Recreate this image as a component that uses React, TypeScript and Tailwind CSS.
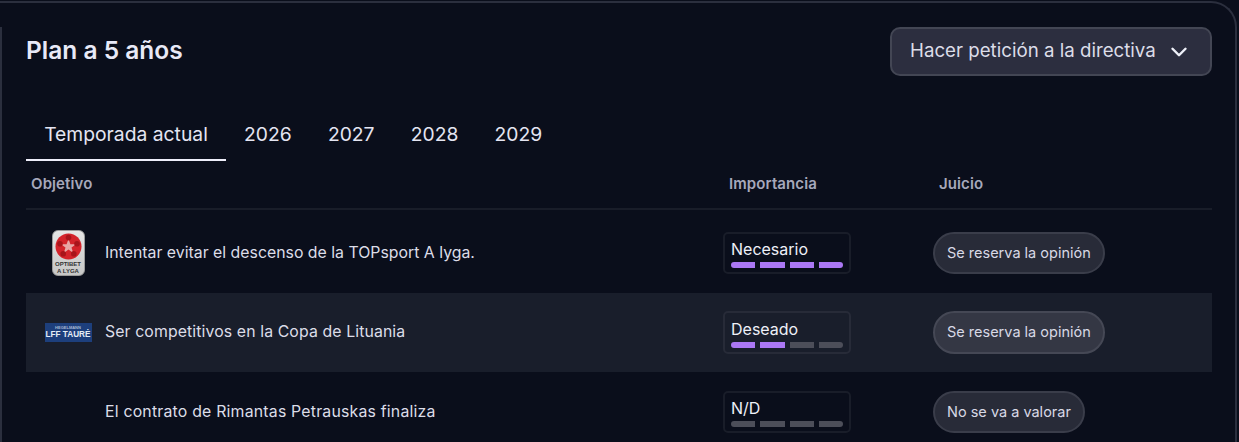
import { ChevronDown } from "lucide-react";

const rows = [
  { logo: "aLyga", goal: "Intentar evitar el descenso de la TOPsport A lyga.", spacing: "tracking-normal", level: "Necesario", filled: 4, verdict: "Se reserva la opinión" },
  { logo: "taure", goal: "Ser competitivos en la Copa de Lituania", spacing: "tracking-[0.1px]", level: "Deseado", filled: 2, verdict: "Se reserva la opinión" },
  { logo: "", goal: "El contrato de Rimantas Petrauskas finaliza", spacing: "tracking-[0.2px]", level: "N/D", filled: 0, verdict: "No se va a valorar" },
];

const years = ["2026", "2027", "2028", "2029"];

const ALygaLogo = () => (
  <div className="flex h-[46px] w-[33px] flex-col items-center rounded-[6px] border border-[#9a9a9a] bg-gradient-to-b from-[#e6e6e6] to-[#c6c6c6] pt-[2px]">
    <svg width="27" height="27" viewBox="0 0 27 27">
      <circle cx="13.5" cy="13.5" r="13" fill="#d4232b" />
      <path d="M13.5 6l1.9 5.2h5.6l-4.5 3.3 1.7 5.4-4.7-3.3-4.7 3.3 1.7-5.4-4.5-3.3h5.6z" fill="#e8a6a6" />
      <circle cx="13.5" cy="4.6" r="2.8" fill="#a8141b" />
      <circle cx="22" cy="10.8" r="2.8" fill="#a8141b" />
      <circle cx="18.8" cy="20.8" r="2.8" fill="#a8141b" />
      <circle cx="8.2" cy="20.8" r="2.8" fill="#a8141b" />
      <circle cx="5" cy="10.8" r="2.8" fill="#a8141b" />
    </svg>
    <span className="mt-[1px] text-center font-['Liberation_Sans',sans-serif] text-[6px] leading-[7px] font-bold text-[#333]">OPTIBET<br />A LYGA</span>
  </div>
);

const TaureLogo = () => (
  <div className="flex h-[19px] w-[47px] flex-col items-center justify-center overflow-hidden bg-[#1d3f7c] font-['Liberation_Sans',sans-serif] font-bold whitespace-nowrap text-[#e6ecf5]">
    <span className="text-[4px] leading-[5px] text-[#a9b8d3]">HEGELMANN</span>
    <span className="text-[8.2px] leading-[9px]">LFF TAURĖ</span>
  </div>
);

const Row = ({ row, striped }: { row: (typeof rows)[number]; striped: boolean }) => (
  <div className={`flex h-[79.5px] items-center ${striped ? "bg-[#191e2b]" : ""}`}>
    <div className="flex w-[79px] shrink-0 justify-center pl-[5px]">
      {row.logo === "aLyga" && <ALygaLogo />}
      {row.logo === "taure" && <TaureLogo />}
    </div>
    <div className={`w-[618px] shrink-0 text-[15.85px] text-[#dcdde8] ${row.spacing}`}>{row.goal}</div>
    <div className={`flex h-[42.5px] w-[128px] shrink-0 flex-col justify-end rounded-[5px] border-2 px-[6px] pb-[4px] ${striped ? "border-[#272b38]" : "border-[#191d29]"}`}>
      <span className="mb-[1px] text-[16px] leading-[24px] text-[#eef0f8]">{row.level}</span>
      <div className="flex gap-[5px]">
        {[0, 1, 2, 3].map((i) => (
          <div key={i} className={`h-[6px] flex-1 first:rounded-l-full last:rounded-r-full ${i < row.filled ? "bg-[#ab78f4]" : "bg-[#4c4e59]"}`} />
        ))}
      </div>
    </div>
    <div className="ml-[82px]">
      <span className={`inline-flex h-[42.5px] items-center rounded-full border-2 px-[12px] text-[14.5px] text-[#d8d9e6] ${striped ? "border-[#454855] bg-[#343744]" : "border-[#3a3d4a] bg-[#282b38]"}`}>{row.verdict}</span>
    </div>
  </div>
);

export default function App() {
  return (
    <div className="h-[442px] w-[1239px] overflow-hidden bg-[#0a0e1b] pt-[1px] font-['Inter',sans-serif]">
      <div className="relative h-[460px] w-[1237px] rounded-tr-[26px] border-t-2 border-r-2 border-[#2b2f3e] pt-[24px] pr-[23px] pl-[26px]">
        <div className="absolute top-[24px] left-0 h-[420px] w-[2px] bg-[#2b2f3e]" />
        <div className="flex items-center justify-between">
          <h2 className="pb-[3px] text-[24.5px] leading-[46px] font-semibold text-[#e8e9f7]">Plan a 5 años</h2>
          <button className="flex h-[49px] w-[322px] items-center justify-between rounded-[10px] border-2 border-[#434654] bg-[#2c2e3f] pr-[18px] pl-[18px] text-[18.7px] text-[#dcdde8]">
            Hacer petición a la directiva
            <ChevronDown size={26} strokeWidth={2.25} className="text-[#eef0f8]" />
          </button>
        </div>
        <div className="mt-[34px] flex h-[51px] items-stretch text-[19.3px] text-[#e4e5f2]">
          <div className="flex w-[200px] items-center justify-center border-b-2 border-[#eeeefa] pb-[1px]">Temporada actual</div>
          {years.map((y) => (
            <div key={y} className="flex items-center px-[18.1px] pb-[3px]">{y}</div>
          ))}
        </div>
        <div className="mb-[3px] flex h-[49px] items-center border-b-2 border-[#191d29] text-[15px] font-semibold tracking-[0.1px] text-[#a6a8bb]">
          <div className="w-[703px] pl-[5px]">Objetivo</div>
          <div className="w-[210px]">Importancia</div>
          <div>Juicio</div>
        </div>
        {rows.map((row, i) => (
          <Row key={row.goal} row={row} striped={i === 1} />
        ))}
      </div>
    </div>
  );
}
